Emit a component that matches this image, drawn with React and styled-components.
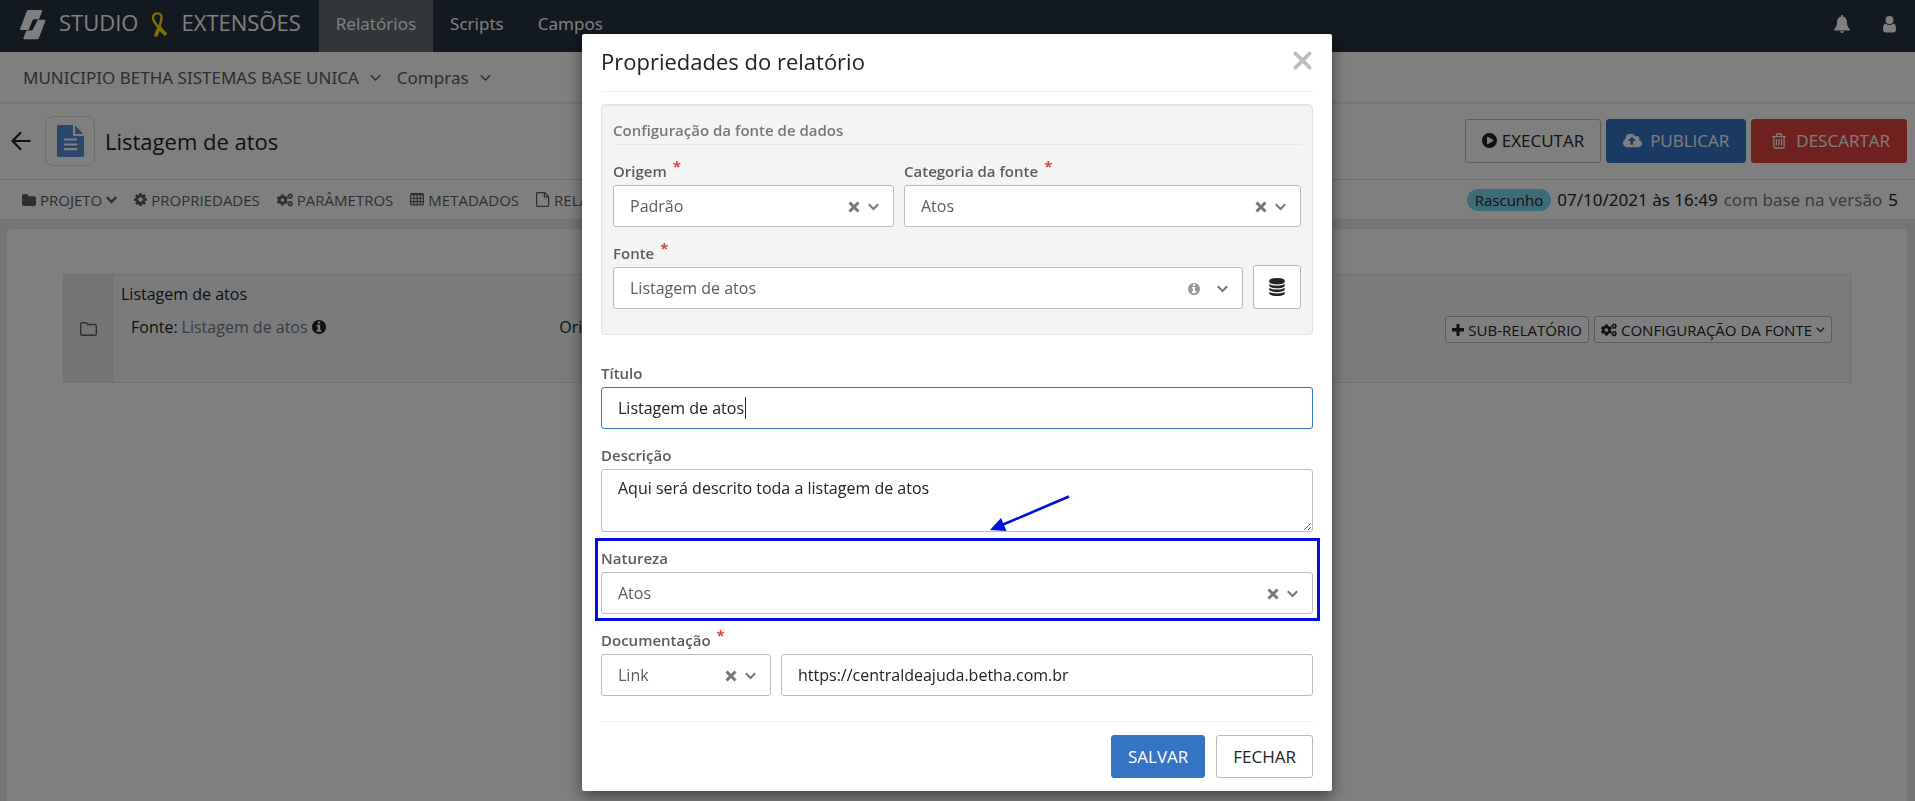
import React from 'react';
import styled, { createGlobalStyle, css } from 'styled-components';
import { FaCogs } from 'react-icons/fa';

const GlobalStyle = createGlobalStyle`
  *, *::before, *::after { box-sizing: border-box; }
  html, body { margin: 0; }
  body {
    font-family: "Open Sans", "Noto Sans", sans-serif;
    font-size: 16px;
    line-height: 22px;
    color: #222;
    background: #e6e8ec;
  }
  button, input, select, textarea { font: inherit; color: inherit; }
  a { color: inherit; text-decoration: none; }
  svg { display: block; flex: none; }
  h1, h2, h3, p { margin: 0; font-weight: 400; }
`;

/* ---------- icons ---------- */

const glyphs = {
  play: 'M896 128q209 0 385.5 103t279.5 279.5 103 385.5-103 385.5-279.5 279.5-385.5 103-385.5-103-279.5-279.5-103-385.5 103-385.5 279.5-279.5 385.5-103zm384 823q32-18 32-55t-32-55l-544-320q-31-19-64-1-32 19-32 56v640q0 37 32 56 16 8 32 8 17 0 32-9z',
  info: 'M1152 1376v-160q0-14-9-23t-23-9h-96v-512q0-14-9-23t-23-9h-320q-14 0-23 9t-9 23v160q0 14 9 23t23 9h96v320h-96q-14 0-23 9t-9 23v160q0 14 9 23t23 9h448q14 0 23-9t9-23zm-128-896v-160q0-14-9-23t-23-9h-192q-14 0-23 9t-9 23v160q0 14 9 23t23 9h192q14 0 23-9t9-23zm640 416q0 209-103 385.5t-279.5 279.5-385.5 103-385.5-103-279.5-279.5-103-385.5 103-385.5 279.5-279.5 385.5-103 385.5 103 279.5 279.5 103 385.5z',
  cog: 'M1152 896q0-106-75-181t-181-75-181 75-75 181 75 181 181 75 181-75 75-181zm512-109v222q0 12-8 23t-20 13l-185 28q-19 54-39 91 35 50 107 138 10 12 10 25t-9 23q-27 37-99 108t-94 71q-12 0-26-9l-138-108q-44 23-91 38-16 136-29 186-7 28-36 28h-222q-14 0-24.5-8.5t-11.5-21.5l-28-184q-49-16-90-37l-141 107q-10 9-25 9-14 0-25-11-126-114-165-168-7-10-7-23 0-12 8-23 15-21 51-66.5t54-70.5q-27-50-41-99l-183-27q-13-2-21-12.5t-8-23.5v-222q0-12 8-23t19-13l186-28q14-46 39-92-40-57-107-138-10-12-10-24 0-10 9-23 26-36 98.5-107.5t94.5-71.5q13 0 26 10l138 107q44-23 91-38 16-136 29-186 7-28 36-28h222q14 0 24.5 8.5t11.5 21.5l28 184q49 16 90 37l142-107q9-9 24-9 13 0 25 10 129 119 165 170 7 8 7 22 0 12-8 23-15 21-51 66.5t-54 70.5q26 50 41 98l183 28q13 2 21 12.5t8 23.5z',
  plus: 'M1664 736v256q0 40-28 68t-68 28h-480v480q0 40-28 68t-68 28h-192q-40 0-68-28t-28-68v-480h-480q-40 0-68-28t-28-68v-256q0-40 28-68t68-28h480v-416q0-40 28-68t68-28h192q40 0 68 28t28 68v416h480q40 0 68 28t28 68z',
  database: 'M896 768q237 0 443-43t325-127v170q0 69-103 128t-280 93.5-385 34.5-385-34.5-280-93.5-103-128v-170q119 84 325 127t443 43zm0 768q237 0 443-43t325-127v170q0 69-103 128t-280 93.5-385 34.5-385-34.5-280-93.5-103-128v-170q119 84 325 127t443 43zm0-384q237 0 443-43t325-127v170q0 69-103 128t-280 93.5-385 34.5-385-34.5-280-93.5-103-128v-170q119 84 325 127t443 43zm0-1152q208 0 385 34.5t280 93.5 103 128v128q0 69-103 128t-280 93.5-385 34.5-385-34.5-280-93.5-103-128v-128q0-69 103-128t280-93.5 385-34.5z',
  folder: 'M1728 608v704q0 92-66 158t-158 66h-1216q-92 0-158-66t-66-158v-960q0-92 66-158t158-66h320q92 0 158 66t66 158v32h672q92 0 158 66t66 158z',
  cloud: 'M1216 864q0-14-9-23l-352-352q-9-9-23-9t-23 9l-351 351q-10 12-10 24 0 14 9 23t23 9h224v352q0 13 9.5 22.5t22.5 9.5h192q13 0 22.5-9.5t9.5-22.5v-352h224q13 0 22.5-9.5t9.5-22.5zm640 288q0 159-112.5 271.5t-271.5 112.5h-1088q-185 0-316.5-131.5t-131.5-316.5q0-130 70-240t188-165q-2-30-2-43 0-212 150-362t362-150q156 0 285.5 87t188.5 231q71-62 166-62 106 0 181 75t75 181q0 76-41 138 130 31 213.5 135.5t83.5 238.5z',
  trash: 'M704 736v576q0 14-9 23t-23 9h-64q-14 0-23-9t-9-23v-576q0-14 9-23t23-9h64q14 0 23 9t9 23zm256 0v576q0 14-9 23t-23 9h-64q-14 0-23-9t-9-23v-576q0-14 9-23t23-9h64q14 0 23 9t9 23zm256 0v576q0 14-9 23t-23 9h-64q-14 0-23-9t-9-23v-576q0-14 9-23t23-9h64q14 0 23 9t9 23zm128 724v-948h-896v948q0 22 7 40.5t14.5 27 10.5 8.5h832q3 0 10.5-8.5t14.5-27 7-40.5zm-672-1076h448l-48-117q-7-9-17-11h-317q-10 2-17 11zm928 32v64q0 14-9 23t-23 9h-96v948q0 83-47 143.5t-113 60.5h-832q-66 0-113-58.5t-47-141.5v-952h-96q-14 0-23-9t-9-23v-64q0-14 9-23t23-9h309l70-167q15-37 54-63t79-26h320q40 0 79 26t54 63l70 167h309q14 0 23 9t9 23z',
};

const Glyph = ({ name, width, height = width, box = '128 128 1536 1536' }) => (
  <svg width={width} height={height} viewBox={box} fill="currentColor" aria-hidden="true">
    <path d={glyphs[name]} />
  </svg>
);

const Chevron = ({ width = 11, stroke = 2 }) => (
  <svg width={width} height="8" viewBox="0 0 11 8" fill="none" stroke="currentColor" strokeWidth={stroke} aria-hidden="true">
    <path d="M.8 1.2 5.5 6l4.7-4.8" />
  </svg>
);

const Logo = () => (
  <svg width="26" height="30" viewBox="0 0 26 30" fill="#fff" aria-hidden="true">
    <path d="M8.6 0H21c1 0 1.500.6 1.100 1.500L19 9.200h-4.600c-1 0-1.500.3-1.900 1.200L8.600 20H1.200C.2 20-.2 19.500.2 18.500L6.700 1.500C7.100.5 7.600 0 8.600 0Z" />
    <path d="M17.800 9.800h6.500c1 0 1.400.5 1 1.500L19 27.700c-.4 1-.9 1.500-1.900 1.500H4.500c-1 0-1.400-.6-1-1.500l2.900-7.200H11c1 0 1.600-.4 2-1.300Z" />
    <path d="m14.600 9.600-4 10.300" stroke="#243242" strokeWidth="1.200" />
  </svg>
);

const Ribbon = () => (
  <svg width="17" height="26" viewBox="0 0 17 26" fill="none" stroke="#ffe100" aria-hidden="true">
    <path d="M4.600 24.500C6.500 18 10 13 10.500 6c.2-3-1.500-4.800-4-4.600C3.500 1.600 1.200 3.800 2 6.600 3.300 11.500 9 17.500 14.800 23" strokeWidth="2.400" />
    <path d="M4.800 24.200c.8-3.600 2.400-6.500 4-9.700M8 14.800c2 2.900 4.200 5.400 7 7.900" strokeWidth="3.600" />
  </svg>
);

const BellIcon = () => (
  <svg width="16" height="18" viewBox="0 0 16 18" fill="currentColor" aria-hidden="true">
    <path d="M7 0h2v1.600c2.500.6 3.800 2.400 3.900 5 .1 3.500.9 5.800 3.100 7.800v1.200H0v-1.200c2.200-2 3-4.300 3.100-7.800.1-2.600 1.400-4.400 3.900-5ZM5.800 16.200h4.400A2.200 2 0 0 1 8 18a2.200 2 0 0 1-2.200-1.800Z" />
  </svg>
);

const UserIcon = () => (
  <svg width="13" height="17" viewBox="0 0 13 17" fill="currentColor" aria-hidden="true">
    <circle cx="6.500" cy="4" r="4" />
    <path d="M2.800 7.500A5.300 5.300 0 0 0 6.500 9a5.300 5.300 0 0 0 3.700-1.500C12.300 7.700 13 10 13 13.200c0 2.200-1.100 3.300-2.800 3.300H2.800C1.100 16.500 0 15.400 0 13.200 0 10 .7 7.700 2.800 7.500Z" />
  </svg>
);

const BackIcon = () => (
  <svg width="20" height="20" viewBox="0 0 20 20" fill="none" stroke="currentColor" strokeWidth="2.200" aria-hidden="true">
    <path d="M19.500 10H2M10 1.300 1.600 10l8.400 8.700" />
  </svg>
);

const DocumentIcon = () => (
  <svg width="27" height="32" viewBox="0 0 27 32" fill="#548fd8" aria-hidden="true">
    <path d="M1.500 0H16v9.500c0 1 .6 1.500 1.500 1.500H27v19.500c0 1-.6 1.500-1.500 1.500h-24C.6 32 0 31.500 0 30.500v-29C0 .6.600 0 1.500 0ZM18 .6 26.500 9H18Z" />
    <path d="M8 14.500h11M8 19.500h11.500M8 24.200h11.500" stroke="#fff" strokeWidth="2.200" strokeLinecap="round" />
  </svg>
);

const TableIcon = () => (
  <svg width="14" height="13" viewBox="0 0 14 13" fill="none" stroke="currentColor" aria-hidden="true">
    <rect x=".6" y=".6" width="12.800" height="11.300" rx="1" strokeWidth="1.200" />
    <path d="M1 1.500h12" strokeWidth="1.600" />
    <path d="M1 5.200h12M1 8.600h12M4 2v10M7.200 2v10M10.300 2v10" strokeWidth="1.100" />
  </svg>
);

const FileIcon = () => (
  <svg width="14" height="15" viewBox="0 0 14 15" fill="none" stroke="currentColor" strokeWidth="1.200" aria-hidden="true">
    <path d="M1.400.6h7.200l4 4v9c0 .5-.3.8-.8.8H1.400c-.5 0-.8-.3-.8-.8V1.400c0-.5.3-.8.8-.8ZM8.400.8v4.100h4.100" />
  </svg>
);

const FolderOutline = () => (
  <svg width="17" height="14" viewBox="0 0 17 14" fill="none" stroke="currentColor" strokeWidth="1.400" aria-hidden="true">
    <path d="M2.200.7h3.600c.9 0 1.500.6 1.500 1.500v.3h7.400c.9 0 1.600.7 1.600 1.600v7.600c0 .9-.7 1.600-1.600 1.600H2.300c-.9 0-1.600-.7-1.600-1.600V2.200C.7 1.300 1.300.7 2.200.7Z" />
  </svg>
);

const Cross = ({ size, stroke, cap = 'butt' }) => (
  <svg width={size} height={size} viewBox="0 0 16 16" fill="none" stroke="currentColor" strokeWidth={stroke} strokeLinecap={cap} aria-hidden="true">
    <path d="m2 2 12 12M14 2 2 14" />
  </svg>
);

/* ---------- page ---------- */

const Page = styled.div`
  min-height: 100vh;
  display: flex;
  flex-direction: column;
`;

const TopBar = styled.header`
  display: flex;
  height: 52px;
  padding: 0 19px 0 20px;
  background: #243242;
  color: #fff;
`;

const Brand = styled.div`
  display: flex;
  align-items: center;
  gap: 13px;
  padding: 0 18px 8px 0;
  font-size: 22px;

  svg:first-child { margin-top: 6px; }
`;

const Product = styled.span`
  display: flex;
  align-items: center;
  gap: 13px;
`;

const Nav = styled.nav`
  display: flex;
  flex: 1;
`;

const NavLink = styled.a`
  display: flex;
  align-items: center;
  padding: 0 17px 4px;
  font-family: "Noto Sans", "Open Sans", sans-serif;
  font-size: 17px;
  background: ${(p) => (p.$active ? '#616c74' : 'transparent')};
`;

const IconGroup = styled.div`
  display: flex;
  align-items: center;
  gap: 33px;
  padding-bottom: 4px;
`;

const IconButton = styled.button`
  display: flex;
  padding: 0;
  border: 0;
  background: none;
`;

const ContextBar = styled.div`
  display: flex;
  align-items: center;
  gap: 16px;
  height: 52px;
  padding: 2px 23px 0;
  border-bottom: 2px solid #ececec;
  background: #fff;
  color: #5c5c5c;
  font-family: "Noto Sans", "Open Sans", sans-serif;
  font-size: 17px;
`;

const ContextButton = styled.button`
  display: flex;
  align-items: center;
  gap: 11px;
  padding: 0;
  border: 0;
  background: none;
`;

const TitleBar = styled.div`
  display: flex;
  align-items: center;
  height: 76px;
  padding: 0 8px 2px 11px;
  border-bottom: 1px solid #dadada;
  background: #fff;
`;

const ReportBadge = styled.div`
  display: flex;
  align-items: center;
  justify-content: center;
  width: 50px;
  height: 50px;
  margin: 0 10px 0 14px;
  border: 1px solid #dadada;
  border-radius: 8px;
`;

const PageTitle = styled.h1`
  flex: 1;
  font-size: 22px;
  line-height: 30px;
`;

const Actions = styled.div`
  display: flex;
  gap: ${(p) => p.$gap || 5}px;
  justify-content: flex-end;
`;

const tones = {
  plain: css`border-color: #b9b9b9; background: #fff; color: #222;`,
  primary: css`border-color: #3375c4; background: #3375c4; color: #fff;`,
  danger: css`border-color: #de423a; background: #de423a; color: #fff;`,
};

const Button = styled.button`
  display: flex;
  align-items: center;
  justify-content: center;
  gap: ${(p) => p.$gap || 6}px;
  height: 44px;
  padding: 0 16px;
  border: 1px solid;
  border-radius: 3px;
  font-size: 17px;
  ${(p) => tones[p.$tone || 'plain']}
`;

const DiscardButton = styled(Button)`
  padding-left: 20px;
`;

const SmallButton = styled(Button)`
  gap: 4px;
  height: 27px;
  padding: 0 6px;
  font-size: 15px;
`;

const Toolbar = styled.div`
  display: flex;
  align-items: center;
  justify-content: space-between;
  height: 39px;
  padding: 0 17px 0 22px;
  background: #fff;
`;

const Tools = styled.div`
  display: flex;
  align-items: center;
  gap: 17px;
`;

const Tool = styled.button`
  display: flex;
  align-items: center;
  gap: 4px;
  padding: 0;
  border: 0;
  background: none;
  font-size: 15px;
  color: #5c5c5c;
`;

const Status = styled.p`
  display: flex;
  align-items: center;
  gap: 6px;
  font-family: "Noto Sans", "Open Sans", sans-serif;
  font-size: 17px;
`;

const Pill = styled.span`
  padding: 0 8px;
  border-radius: 11px;
  background: #7ad8f2;
  font-family: "Open Sans", sans-serif;
  font-size: 15px;
`;

const Muted = styled.span`
  color: #777;
`;

const Panel = styled.main`
  flex: 1;
  margin: 10px 8px 0 7px;
  padding: 45px 56px;
  border-radius: 4px 4px 0 0;
  background: #fff;
`;

const ReportCard = styled.section`
  display: grid;
  grid-template-columns: 49px 1fr;
  min-height: 109px;
  border: 1px solid #e0e2e6;
  background: #f5f7fb;
`;

const CardHandle = styled.div`
  display: flex;
  align-items: center;
  justify-content: center;
  border-right: 1px solid #e0e2e6;
  background: #e9eaee;
  color: #5c5c5c;
`;

const CardBody = styled.div`
  padding: 8px 6px 0 8px;
`;

const CardRow = styled.div`
  display: grid;
  grid-template-columns: 1fr 1fr 2fr;
  align-items: start;
  padding: 11px 0 0 10px;

  ${Actions} { padding-right: 12px; }
`;

const Info = styled.p`
  display: flex;
  align-items: center;
  gap: 4px;
`;

/* ---------- dialog ---------- */

const Overlay = styled.div`
  position: fixed;
  inset: 0;
  overflow: auto;
  padding-right: 1px;
  background: rgba(0, 0, 0, 0.5);
`;

const Dialog = styled.form`
  position: relative;
  max-width: 750px;
  margin: 34px auto 0;
  padding: 0 19px 13px;
  border-radius: 2px;
  background: #fff;
  box-shadow: 0 5px 15px rgba(0, 0, 0, 0.5);
`;

const DialogHeader = styled.div`
  display: flex;
  align-items: center;
  justify-content: space-between;
  height: 58px;
  padding: 0 1px 4px 0;
  border-bottom: 1px solid #f2f2f2;
  color: #bcbcbc;
`;

const DialogTitle = styled.h2`
  font-size: 22px;
  line-height: 30px;
  color: #222;
`;

const SourceBox = styled.section`
  display: grid;
  gap: 15px;
  margin: 12px 0 27px;
  padding: 11px 11px 25px;
  border: 1px solid #e2e2e2;
  border-radius: 4px;
  background: #f4f4f4;
  box-shadow: inset 0 1px 2px rgba(0, 0, 0, 0.06);
`;

const BoxTitle = styled.h3`
  border-bottom: 1px solid #e8e8e8;
  font-size: 15px;
  font-weight: 600;
  line-height: 28px;
  color: #777;
`;

const Fields = styled.div`
  display: grid;
  gap: 15px;
`;

const Columns = styled.div`
  display: grid;
  grid-template-columns: ${(p) => p.$cols};
  gap: 10px;
  align-items: end;
`;

const FieldRoot = styled.div`
  position: relative;
  display: flex;
  flex-direction: column;
`;

const Label = styled.label`
  height: 25px;
  font-size: 15px;
  font-weight: 600;
  line-height: 22px;
  color: #5c5c5c;
`;

const Star = styled.span`
  margin-left: 6px;
  font-size: 15px;
  font-weight: 700;
  line-height: 1px;
  vertical-align: 5px;
  color: #de423a;
`;

const control = css`
  display: block;
  width: 100%;
  height: 42px;
  margin: 0;
  padding: 0 16px;
  border: 1px solid #bcbcbc;
  border-radius: 3px;
  background: #fff;
  outline: none;
`;

const Input = styled.input`
  ${control}
  border-color: ${(p) => (p.$focused ? '#3375c4' : '#bcbcbc')};
`;

const TextArea = styled.textarea`
  ${control}
  height: 63px;
  padding-top: 7px;
  resize: vertical;
`;

const Select = styled.select`
  ${control}
  appearance: none;
  color: #5c5c5c;
`;

const ControlBox = styled.div`
  position: relative;
`;

const Adornments = styled.div`
  position: absolute;
  top: 2px;
  right: 15px;
  bottom: 0;
  display: flex;
  align-items: center;
  gap: ${(p) => p.$gap || 8}px;
  color: #777;
  pointer-events: none;

  button { pointer-events: auto; }
`;

const FaintIcon = styled.span`
  color: #999;
`;

const Caret = styled.span`
  position: absolute;
  top: 10px;
  left: 144px;
  width: 1px;
  height: 22px;
  background: #222;
`;

const Highlight = styled.div`
  position: absolute;
  inset: -9px -7px -7px -6px;
  border: 3px solid #0010dc;
  pointer-events: none;
`;

const Pointer = styled.svg`
  position: absolute;
  top: 460px;
  left: 408px;
  pointer-events: none;
`;

const DatabaseButton = styled(Button)`
  padding: 0;
`;

const DialogFooter = styled.div`
  margin-top: 25px;
  padding-top: 13px;
  border-top: 1px solid #f2f2f2;

  ${Button} { height: 43px; }
`;

const Field = ({ id, label, required, children }) => (
  <FieldRoot>
    <Label htmlFor={id}>
      {label}
      {required && <Star>*</Star>}
    </Label>
    {children}
  </FieldRoot>
);

const Picker = ({ id, value, info }) => (
  <ControlBox>
    <Select id={id} defaultValue={value}>
      <option>{value}</option>
    </Select>
    <Adornments $gap={info ? 17 : 8}>
      {info ? (
        <FaintIcon><Glyph name="info" width={12} /></FaintIcon>
      ) : (
        <IconButton type="button" aria-label="Limpar"><Cross size={12} stroke={4} /></IconButton>
      )}
      <Chevron />
    </Adornments>
  </ControlBox>
);

const ReportPage = () => (
  <Page>
    <TopBar>
      <Brand>
        <Logo />
        <Product>STUDIO <Ribbon /></Product>
        EXTENSÕES
      </Brand>
      <Nav>
        <NavLink href="#relatorios" $active>Relatórios</NavLink>
        <NavLink href="#scripts">Scripts</NavLink>
        <NavLink href="#campos">Campos</NavLink>
      </Nav>
      <IconGroup>
        <IconButton aria-label="Notificações"><BellIcon /></IconButton>
        <IconButton aria-label="Usuário"><UserIcon /></IconButton>
      </IconGroup>
    </TopBar>

    <ContextBar>
      <ContextButton>MUNICIPIO BETHA SISTEMAS BASE UNICA <Chevron stroke={1.4} /></ContextButton>
      <ContextButton>Compras <Chevron stroke={1.4} /></ContextButton>
    </ContextBar>

    <TitleBar>
      <IconButton aria-label="Voltar"><BackIcon /></IconButton>
      <ReportBadge><DocumentIcon /></ReportBadge>
      <PageTitle>Listagem de atos</PageTitle>
      <Actions>
        <Button $gap={5}><Glyph name="play" width={15} />EXECUTAR</Button>
        <Button $tone="primary" $gap={8}>
          <Glyph name="cloud" width={19} height={14} box="-64 256 1920 1280" />PUBLICAR
        </Button>
        <DiscardButton $tone="danger" $gap={10}>
          <Glyph name="trash" width={14} height={16} box="192 128 1408 1536" />DESCARTAR
        </DiscardButton>
      </Actions>
    </TitleBar>

    <Toolbar>
      <Tools>
        <Tool><Glyph name="folder" width={14} height={12} box="64 128 1664 1408" />PROJETO<Chevron stroke={2.4} /></Tool>
        <Tool><Glyph name="cog" width={13} />PROPRIEDADES</Tool>
        <Tool><FaCogs size={16} />PARÂMETROS</Tool>
        <Tool><TableIcon />METADADOS</Tool>
        <Tool><FileIcon /> RELATÓRIOS</Tool>
      </Tools>
      <Status>
        <Pill>Rascunho</Pill>
        <span>07/10/2021 às 16:49</span>
        <Muted>com base na versão</Muted>
        <span>5</span>
      </Status>
    </Toolbar>

    <Panel>
      <ReportCard>
        <CardHandle><FolderOutline /></CardHandle>
        <CardBody>
          <p>Listagem de atos</p>
          <CardRow>
            <Info>Fonte: <Muted>Listagem de atos</Muted> <Glyph name="info" width={14} /></Info>
            <Info>Origem: <Muted>Padrão</Muted></Info>
            <Actions>
              <SmallButton><Glyph name="plus" width={12} />SUB-RELATÓRIO</SmallButton>
              <SmallButton><FaCogs size={16} />CONFIGURAÇÃO DA FONTE<Chevron width={9} stroke={1.4} /></SmallButton>
            </Actions>
          </CardRow>
        </CardBody>
      </ReportCard>
    </Panel>
  </Page>
);

const PropertiesDialog = () => (
  <Overlay>
    <Dialog role="dialog" aria-labelledby="dialog-title" onSubmit={(e) => e.preventDefault()}>
      <DialogHeader>
        <DialogTitle id="dialog-title">Propriedades do relatório</DialogTitle>
        <IconButton type="button" aria-label="Fechar"><Cross size={19} stroke={3} cap="round" /></IconButton>
      </DialogHeader>

      <SourceBox>
        <BoxTitle>Configuração da fonte de dados</BoxTitle>
        <Columns $cols="281fr 397fr">
          <Field id="origem" label="Origem" required><Picker id="origem" value="Padrão" /></Field>
          <Field id="categoria" label="Categoria da fonte" required><Picker id="categoria" value="Atos" /></Field>
        </Columns>
        <Columns $cols="1fr 48px">
          <Field id="fonte" label="Fonte" required><Picker id="fonte" value="Listagem de atos" info /></Field>
          <DatabaseButton type="button" aria-label="Fonte de dados">
            <Glyph name="database" width={16} height={18} box="128 0 1536 1792" />
          </DatabaseButton>
        </Columns>
      </SourceBox>

      <Fields>
        <Field id="titulo" label="Título">
          <ControlBox>
            <Input id="titulo" type="text" defaultValue="Listagem de atos" $focused />
            <Caret />
          </ControlBox>
        </Field>
        <Field id="descricao" label="Descrição">
          <TextArea id="descricao" defaultValue="Aqui será descrito toda a listagem de atos" />
        </Field>
        <Field id="natureza" label="Natureza">
          <Picker id="natureza" value="Atos" />
          <Highlight />
        </Field>
        <Field id="documentacao" label="Documentação" required>
          <Columns $cols="170px 1fr">
            <Picker id="documentacao" value="Link" />
            <Input type="text" aria-label="Endereço da documentação" defaultValue="https://centraldeajuda.betha.com.br" />
          </Columns>
        </Field>
      </Fields>

      <DialogFooter>
        <Actions $gap={11}>
          <Button type="submit" $tone="primary">SALVAR</Button>
          <Button type="button">FECHAR</Button>
        </Actions>
      </DialogFooter>

      <Pointer width="80" height="40" viewBox="0 0 80 40" aria-hidden="true">
        <path d="M12 31 79 2.500" stroke="#0010dc" strokeWidth="2.600" />
        <path d="M0 36 11 24l5.500 13Z" fill="#0010dc" />
      </Pointer>
    </Dialog>
  </Overlay>
);

export default function App() {
  return (
    <>
      <GlobalStyle />
      <ReportPage />
      <PropertiesDialog />
    </>
  );
}
